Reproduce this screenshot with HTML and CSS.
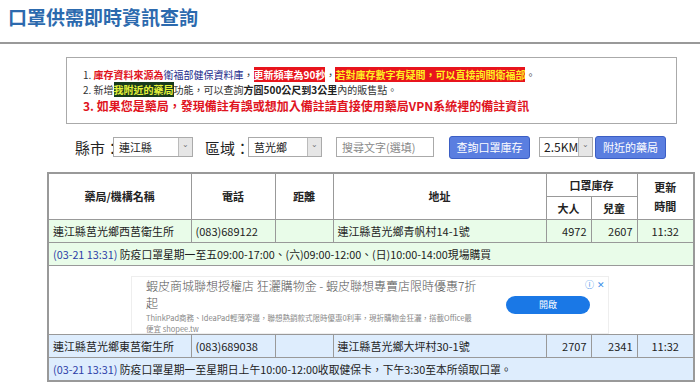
FILE: index.html
```html
<!DOCTYPE html>
<html lang="zh-Hant">
<head>
  <meta charset="UTF-8">
  <title>口罩供需即時資訊查詢</title>
  <link rel="stylesheet" href="styles.css">
</head>
<body>
  <h1 class="title">口罩供需即時資訊查詢</h1>
  <hr class="rule">

  <!-- notice box -->
  <div class="notice">
    <div class="line">1. <span class="red">庫存資料來源為</span><span class="navy">衛福部健保資料庫</span>，<span class="hl-white">更新頻率為90秒</span>，<span class="hl-yellow">若對庫存數字有疑問，可以直接詢問衛福部</span>。</div>
    <div class="line">2. 新增<span class="hl-green">我附近的藥局</span>功能，可以查詢<b>方圓500公尺到3公里</b>內的販售點。</div>
    <div class="line big red">3. 如果您是藥局，發現備註有誤或想加入備註請直接使用藥局VPN系統裡的備註資訊</div>
  </div>

  <!-- search form -->
  <div class="form">
    <label class="lbl">縣市：</label>
    <div class="sel w-county"><span class="val">連江縣</span><span class="arrow">⌄</span></div>
    <label class="lbl lbl-area">區域：</label>
    <div class="sel w-town"><span class="val">莒光鄉</span><span class="arrow">⌄</span></div>
    <input class="search" type="text" placeholder="搜尋文字(選填)">
    <button class="btn">查詢口罩庫存</button>
    <div class="sel w-km"><span class="val km">2.5KM</span><span class="arrow">⌄</span></div>
    <button class="btn btn-near">附近的藥局</button>
  </div>

  <table class="stock">
    <colgroup>
      <col style="width:143px"><col style="width:84px"><col style="width:58px"><col style="width:213px">
      <col style="width:45px"><col style="width:46px"><col style="width:57px">
    </colgroup>
    <thead>
      <tr>
        <th rowspan="2">藥局/機構名稱</th><th rowspan="2">電話</th><th rowspan="2">距離</th>
        <th rowspan="2">地址</th><th colspan="2">口罩庫存</th><th rowspan="2">更新<br>時間</th>
      </tr>
      <tr><th>大人</th><th>兒童</th></tr>
    </thead>
    <tbody>
      <tr class="green">
        <td>連江縣莒光鄉西莒衛生所</td><td>(083)689122</td><td></td><td>連江縣莒光鄉青帆村14-1號</td>
        <td class="num">4972</td><td class="num">2607</td><td class="ctr">11:32</td>
      </tr>
      <tr class="green">
        <td colspan="7" class="note"><span class="date">(03-21 13:31)</span> 防疫口罩星期一至五09:00-17:00、(六)09:00-12:00、(日)10:00-14:00現場購買</td>
      </tr>
      <tr>
        <td colspan="7" class="ad-cell">
          <div class="ad">
            <div class="ad-text">
              <div class="ad-title">蝦皮商城聯想授權店 狂灑購物金 - 蝦皮聯想專賣店限時優惠7折<br>起</div>
              <div class="ad-sub">ThinkPad商務、IdeaPad輕薄窄邊，聯想熱銷款式限時優惠0利率，現折購物金狂灑，搭載Office最<br>便宜 shopee.tw</div>
            </div>
            <div class="ad-btn">開啟</div>
            <div class="ad-icons"><span class="info">ⓘ</span><span class="close">✕</span></div>
          </div>
        </td>
      </tr>
      <tr class="blue">
        <td>連江縣莒光鄉東莒衛生所</td><td>(083)689038</td><td></td><td>連江縣莒光鄉大坪村30-1號</td>
        <td class="num">2707</td><td class="num">2341</td><td class="ctr">11:32</td>
      </tr>
      <tr class="blue">
        <td colspan="7" class="note"><span class="date">(03-21 13:31)</span> 防疫口罩星期一至星期日上午10:00-12:00收取健保卡，下午3:30至本所領取口罩。</td>
      </tr>
    </tbody>
  </table>
</body>
</html>
```

FILE: styles.css
```css
body {
  margin: 0;
  font-family: "Noto Sans CJK TC", "Noto Sans", sans-serif;
  color: #222;
  background: #fff;
}

.title {
  margin: 0;
  padding: 4px 0 0 8px;
  height: 38px;
  box-sizing: border-box;
  font-size: 19px;
  line-height: 26px;
  color: #2c6aae;
  font-weight: bold;
}

.rule {
  margin: 4px 0 0 0;
  border: none;
  border-top: 2px solid #999;
}

/* notice box */
.notice {
  margin: 13px 23px 0 66px;
  width: 611px;
  height: 67px;
  box-sizing: border-box;
  border: 1px solid #aaa;
  padding: 9px 0 0 16px;
}

.line {
  font-size: 10px;
  line-height: 15px;
  white-space: nowrap;
  color: #333;
}

.line.big {
  font-size: 12px;
  line-height: 18px;
  font-weight: bold;
}

.red { color: #e0141e; font-weight: bold; }
.navy { color: #1a2a8a; }
.hl-white { background: #e8141c; color: #fff; font-weight: bold; }
.hl-yellow { background: #e8141c; color: #ffee22; font-weight: bold; }
.hl-green { background: #173a1c; color: #e6f23a; font-weight: bold; }
.line b { color: #222; }

/* search form */
.form {
  display: flex;
  align-items: center;
  margin: 11px 0 0 75px;
  height: 24px;
}

.lbl {
  width: 38px;
  font-size: 15px;
  color: #222;
  white-space: nowrap;
}

.lbl-area { width: 43px; }

.sel {
  display: flex;
  height: 20px;
  box-sizing: border-box;
  border: 1px solid #aaa;
  background: #fff;
  font-size: 11px;
  margin-right: 12px;
}

.sel .val {
  flex: 1;
  padding-left: 5px;
  line-height: 18px;
  color: #222;
}

.sel .km { font-size: 12px; padding-left: 4px; }

.sel .arrow {
  width: 13px;
  background: #e6e6e6;
  border-left: 1px solid #bbb;
  font-size: 8px;
  color: #777;
  text-align: center;
  line-height: 12px;
}

.w-county { width: 80px; }
.w-town { width: 74px; margin-right: 14px; }
.w-km { width: 54px; margin-right: 2px; }

.search {
  width: 98px;
  height: 20px;
  box-sizing: border-box;
  border: 1px solid #aaa;
  font-family: inherit;
  font-size: 11px;
  padding: 0 5px;
  margin-right: 15px;
}

.search::placeholder { color: #888; }

.btn {
  width: 81px;
  height: 23px;
  background: #5a7ee0;
  border: 1px solid #3b5ec4;
  border-radius: 3px;
  color: #fff;
  font-family: inherit;
  font-size: 11px;
  margin-right: 9px;
  padding: 0;
}

.btn-near { width: 71px; }

/* stock table */
.stock {
  margin: 13px 0 0 47px;
  width: 646px;
  border-collapse: collapse;
  table-layout: fixed;
  border: 2px solid #999;
  font-size: 11px;
}

.stock th, .stock td {
  border: 1px solid #999;
  height: 22px;
  padding: 0 4px;
  white-space: nowrap;
  overflow: hidden;
}

.stock th {
  font-weight: bold;
  line-height: 19px;
  text-align: center;
}

.stock .num { text-align: right; }
.stock .ctr { text-align: center; }
.stock .note { font-size: 10.8px; }

.green td { background: #e9fce9; }
.blue td { background: #deedfd; }

.date { color: #2e3fa8; }

.stock .ad-cell {
  height: 50px;
  padding: 10px 4px 0;
  background: #fff;
  vertical-align: top;
}

.ad {
  position: relative;
  display: flex;
  align-items: center;
  margin-left: 78px;
  width: 478px;
  height: 58px;
  box-sizing: border-box;
  border: 1px solid #eee;
  padding: 0 0 0 14px;
}

.ad-text {
  width: 345px;
  white-space: nowrap;
}

.ad-title {
  font-size: 12px;
  line-height: 17.5px;
  color: #555;
  font-weight: 300;
}

.ad-sub {
  font-size: 7.5px;
  line-height: 11px;
  color: #888;
}

.ad-btn {
  margin-left: 15px;
  width: 84px;
  height: 18px;
  border-radius: 9px;
  background: #1a78e6;
  color: #fff;
  font-size: 9px;
  text-align: center;
  line-height: 18px;
}

.ad-icons {
  position: absolute;
  top: 1px;
  right: 3px;
  font-size: 9px;
  color: #3a8ee8;
}

.ad-icons .close { margin-left: 3px; }
```
